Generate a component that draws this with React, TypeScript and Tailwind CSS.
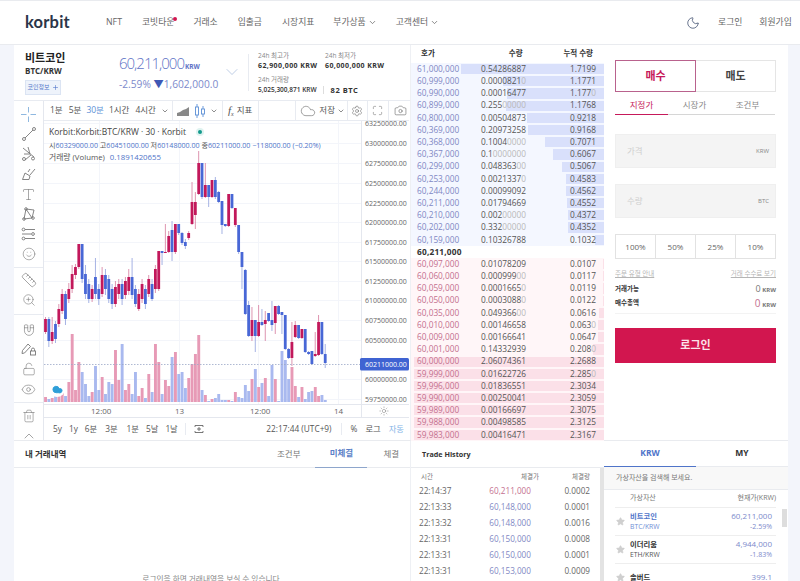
import { Camera, ChevronDown, ChevronUp, Cloud, Eye, LockOpen, Magnet, Maximize, Moon, Plus, Ruler, Settings, Smile, Star, Sun, Trash2, Type, ZoomIn } from "lucide-react";

type Candle = [number, number, number, number, "r" | "b"];

// top, bottom, wick top, wick bottom, colour (page pixels)
const candles: Candle[] = [
  [320, 333, 318, 335, "r"], [320, 342, 318, 348, "b"], [333, 342, 318, 345, "r"], [325, 340, 322, 344, "b"], [310, 325, 305, 328, "r"],
  [295, 312, 290, 315, "r"], [295, 320, 292, 326, "b"], [290, 300, 284, 304, "r"], [275, 290, 266, 294, "r"], [268, 276, 265, 280, "r"],
  [245, 268, 245, 270, "r"], [245, 280, 245, 284, "b"], [275, 295, 266, 300, "b"], [285, 300, 280, 304, "b"], [290, 300, 286, 303, "r"],
  [278, 295, 259, 300, "b"], [290, 300, 285, 306, "b"], [276, 295, 268, 298, "r"], [276, 290, 270, 296, "b"], [280, 300, 276, 304, "b"],
  [290, 305, 285, 310, "b"], [288, 305, 282, 308, "r"], [285, 295, 280, 300, "r"], [285, 300, 280, 306, "b"], [282, 296, 278, 300, "r"],
  [278, 292, 270, 296, "r"], [278, 296, 259, 300, "b"], [290, 305, 286, 308, "b"], [295, 310, 290, 312, "r"], [285, 300, 280, 304, "r"],
  [290, 305, 286, 310, "b"], [280, 295, 276, 298, "r"], [285, 300, 280, 302, "b"], [270, 290, 266, 294, "r"], [252, 290, 252, 292, "r"],
  [252, 254, 252, 266, "b"], [253, 254, 225, 254, "r"], [237, 253, 232, 254, "r"], [231, 253, 222, 262, "b"], [225, 253, 225, 255, "r"],
  [225, 234, 225, 236, "b"], [234, 244, 233, 246, "b"], [243, 247, 240, 250, "b"], [234, 239, 232, 241, "r"], [203, 225, 183, 226, "r"],
  [203, 216, 193, 230, "r"], [164, 195, 152, 196, "r"], [164, 198, 164, 200, "b"], [186, 198, 164, 199, "r"], [186, 198, 186, 208, "b"],
  [181, 198, 181, 199, "r"], [181, 198, 178, 200, "b"], [193, 203, 192, 204, "b"], [202, 226, 202, 235, "b"], [225, 227, 225, 228, "b"],
  [195, 227, 195, 228, "r"], [195, 209, 195, 210, "b"], [209, 226, 209, 228, "r"], [226, 253, 226, 255, "b"], [253, 268, 253, 290, "b"],
  [271, 315, 270, 316, "b"], [306, 337, 302, 338, "b"], [321, 337, 308, 342, "r"], [321, 337, 321, 353, "b"], [323, 337, 306, 338, "r"],
  [323, 326, 310, 327, "b"], [321, 325, 312, 342, "r"], [314, 322, 314, 323, "b"], [321, 326, 302, 332, "b"], [307, 324, 307, 335, "r"],
  [307, 315, 306, 316, "b"], [313, 316, 313, 335, "b"], [316, 350, 316, 351, "b"], [350, 359, 349, 360, "b"], [343, 359, 323, 367, "r"],
  [326, 338, 322, 339, "r"], [326, 339, 326, 340, "b"], [330, 339, 330, 340, "r"], [330, 353, 330, 354, "b"], [353, 355, 352, 356, "b"],
  [352, 365, 352, 366, "b"], [355, 357, 333, 358, "r"], [323, 356, 316, 357, "r"], [323, 355, 323, 356, "b"], [355, 364, 345, 369, "b"],
];

const volumes = [
  5, 3, 4, 6, 8, 10, 6, 20, 68, 12, 40, 30, 18, 6, 10, 36, 12, 25, 8, 20, 18, 52, 22, 58, 12, 18, 8, 30, 6, 14, 4, 28, 10, 58, 40, 8, 22, 16, 45, 50, 28,
  30, 14, 24, 38, 48, 67, 12, 7, 1, 3, 4, 8, 2, 2, 2, 1, 10, 5, 4, 17, 11, 23, 33, 15, 19, 24, 6, 37, 23, 1, 51, 42, 23, 35, 16, 5, 15, 3, 10, 11, 15, 6, 7, 2,
];

const axis: [string, number][] = [
  ["63250000.00", 124], ["63000000.00", 144], ["62750000.00", 164], ["62500000.00", 184], ["62250000.00", 204], ["62000000.00", 223],
  ["61750000.00", 243], ["61500000.00", 262], ["61250000.00", 282], ["61000000.00", 301], ["60750000.00", 321], ["60500000.00", 341],
  ["60000000.00", 380], ["59750000.00", 400],
];

const bids: [string, string, string, number][] = [
  ["61,000,000", "0.54286887", "1.7199", 143], ["60,999,000", "0.00008210", "1.1771", 101], ["60,990,000", "0.00016477", "1.1770", 97],
  ["60,899,000", "0.25500000", "1.1768", 98], ["60,800,000", "0.00504873", "0.9218", 77], ["60,369,000", "0.20973258", "0.9168", 76],
  ["60,368,000", "0.10040000", "0.7071", 59], ["60,367,000", "0.10000000", "0.6067", 51], ["60,299,000", "0.04836300", "0.5067", 42],
  ["60,253,000", "0.00213370", "0.4583", 38], ["60,244,000", "0.00099092", "0.4562", 38], ["60,211,000", "0.01794669", "0.4552", 37],
  ["60,210,000", "0.00200000", "0.4372", 36], ["60,202,000", "0.33200000", "0.4352", 36], ["60,159,000", "0.10326788", "0.1032", 9],
];

const asks: [string, string, string, number][] = [
  ["60,097,000", "0.01078209", "0.0107", 1], ["60,060,000", "0.00099900", "0.0117", 1], ["60,059,000", "0.00016650", "0.0119", 1],
  ["60,050,000", "0.00030880", "0.0122", 1], ["60,035,000", "0.04936600", "0.0616", 5], ["60,010,000", "0.00146658", "0.0630", 6],
  ["60,009,000", "0.00166641", "0.0647", 6], ["60,001,000", "0.14332939", "0.2080", 11], ["60,000,000", "2.06074361", "2.2688", 190],
  ["59,999,000", "0.01622726", "2.2850", 190], ["59,996,000", "0.01836551", "2.3034", 190], ["59,990,000", "0.00250041", "2.3059", 190],
  ["59,989,000", "0.00166697", "2.3075", 190], ["59,988,000", "0.00498585", "2.3125", 190], ["59,983,000", "0.00416471", "2.3167", 190],
];

const trades = [
  ["22:14:37", "60,211,000", "0.0002", "r"], ["22:13:33", "60,148,000", "0.0001", "b"], ["22:13:32", "60,148,000", "0.0016", "b"],
  ["22:13:31", "60,150,000", "0.0008", "b"], ["22:13:31", "60,150,000", "0.0001", "b"], ["22:13:31", "60,153,000", "0.0009", "b"],
];

const Num = ({ value }: { value: string }) => {
  const m = value.match(/^(.*?)(0*)$/)!;
  return (
    <span>
      {m[1]}
      <span className="text-[#b9b9b9]">{m[2]}</span>
    </span>
  );
};

const BookRow = ({ row, side }: { row: [string, string, string, number]; side: "bid" | "ask" }) => (
  <div className={`relative flex h-[12.2px] items-center pl-[6px] pr-[8px] text-[8.3px] text-[#555] ${side === "bid" ? "bg-[#f4f7ff]" : "bg-[#fff6f8]"}`}>
    <div
      className={`absolute right-0 top-[1px] bottom-[1px] ${side === "bid" ? "bg-[#d9e0fb]" : "bg-[#fbe0e8]"}`}
      style={{ width: row[3] }}
    />
    <span className={`relative w-[43px] ${side === "bid" ? "text-[#7f88c4]" : "text-[#c4708f]"}`}>{row[0]}</span>
    <span className="relative ml-[19px] w-[47px] text-right"><Num value={row[1]} /></span>
    <span className="relative ml-auto"><Num value={row[2]} /></span>
  </div>
);

const LineTool = () => (
  <svg width="16" height="16" viewBox="0 0 16 16" fill="none" stroke="#777" strokeWidth="0.9">
    <circle cx="3" cy="13" r="1.5" />
    <circle cx="13" cy="3" r="1.5" />
    <path d="M4 12 12 4" />
  </svg>
);
const ForkTool = () => (
  <svg width="16" height="16" viewBox="0 0 16 16" fill="none" stroke="#777" strokeWidth="0.9">
    <path d="M2 2 13 11M7 1 9 8M3 8 9 8M4 14 10 9" />
    <circle cx="3" cy="13" r="1.5" />
    <circle cx="12" cy="12.5" r="1.5" />
  </svg>
);
const BrushTool = () => (
  <svg width="16" height="16" viewBox="0 0 16 16" fill="none" stroke="#777" strokeWidth="0.9">
    <path d="M1.5 13.5 4 7l5 3-1 3.5zM9 9l5-6M7 6l2-3" />
  </svg>
);
const PatternTool = () => (
  <svg width="16" height="16" viewBox="0 0 16 16" fill="none" stroke="#777" strokeWidth="0.9">
    <path d="M3 13 5 3l6 9 2-8M5 3l8 1M3 13l8-1" />
    <circle cx="5" cy="3" r="1.3" />
    <circle cx="3" cy="13" r="1.3" />
    <circle cx="12" cy="12" r="1.3" />
  </svg>
);
const LevelTool = () => (
  <svg width="16" height="16" viewBox="0 0 16 16" fill="none" stroke="#777" strokeWidth="0.9">
    <circle cx="2.5" cy="3.5" r="1.4" />
    <path d="M4 3.5h10M1 8h9" />
    <circle cx="12" cy="8" r="1.4" />
    <circle cx="2.5" cy="12.5" r="1.4" />
    <path d="M4 12.5h10" />
  </svg>
);
const Crosshair = () => (
  <svg width="15" height="15" viewBox="0 0 15 15" stroke="#8fb8e0" strokeWidth="1">
    <path d="M7.5 0v5.5M7.5 9.5v5.5M0 7.5h5.5M9.5 7.5h5.5" />
  </svg>
);
const PencilLock = () => (
  <svg width="16" height="16" viewBox="0 0 16 16" fill="none" stroke="#777" strokeWidth="0.9">
    <path d="M1.5 9.5 7 3l2.5 2.500L3.5 12l-2.500.5z" />
    <rect x="9.5" y="10" width="5" height="4" />
    <path d="M10.5 10V8.5a1.5 1.5 0 0 1 3 0V10" />
  </svg>
);

const Tool = ({ children }: { children: React.ReactNode }) => (
  <div className="flex h-[20px] shrink-0 items-center justify-center">{children}</div>
);

const Divider = () => <div className="h-[21px] w-px shrink-0 bg-[#e8ebf1]" />;

const ChartBody = () => (
  <svg width="365" height="283" viewBox="45 122 365 283" className="block">
    {axis.map(([, y]) => (
      <path key={y} d={`M45 ${y + 0.5}H362`} stroke="#f3f5fa" strokeWidth="1" />
    ))}
    {[100, 180, 259, 339].map((x) => (
      <path key={x} d={`M${x + 0.5} 122V405`} stroke="#f3f5fa" strokeWidth="1" />
    ))}
    {volumes.map((h, i) => (
      <rect
        key={i}
        x={45.1 + i * 3.33}
        y={403 - h}
        width="2.9"
        height={h}
        fill={candles[i][4] === "r" ? "#e79ab6" : "#a9b9ef"}
      />
    ))}
    {candles.map(([top, bottom, wickTop, wickBottom, c], i) => {
      const x = 46.5 + i * 3.33;
      return (
        <g key={i}>
          <path d={`M${x} ${wickTop}V${wickBottom}`} stroke={c === "r" ? "#d57a9c" : "#8fa0dd"} strokeWidth="0.8" />
          <rect x={x - 1.4} y={top} width="2.8" height={Math.max(bottom - top, 1)} fill={c === "r" ? "#c2185b" : "#4867d6"} />
        </g>
      );
    })}
    <path d="M45 365.5H362" stroke="#9aa7c7" strokeWidth="0.8" strokeDasharray="1.5 1.5" />
    <rect x="362" y="122" width="48" height="283" fill="#fff" />
    <path d="M362.5 122V405" stroke="#e4e7ee" />
    {axis.map(([label, y]) => (
      <text key={label} x="366" y={y + 3} fontSize="7" fill="#666" fontFamily="'Open Sans', sans-serif">
        {label}
      </text>
    ))}
    <rect x="361" y="359" width="49" height="12.5" rx="1.5" fill="#3f63d2" />
    <text x="366" y="368" fontSize="7" fill="#fff" fontFamily="'Open Sans', sans-serif">
      60211000.00
    </text>
  </svg>
);

const Chart = () => (
  <div className="flex h-[341px] border-t border-[#e8ebf1]">
    <div className="flex w-[30px] shrink-0 flex-col overflow-hidden border-r border-[#e4e7ee] pt-[3px] text-[#777]">
      <Tool><Crosshair /></Tool>
      <Tool><LineTool /></Tool>
      <Tool><ForkTool /></Tool>
      <Tool><BrushTool /></Tool>
      <Tool><Type size={15} strokeWidth={1} /></Tool>
      <Tool><PatternTool /></Tool>
      <Tool><LevelTool /></Tool>
      <Tool><Smile size={14} strokeWidth={1} /></Tool>
      <div className="mb-[2px] mt-[3px] h-px shrink-0 bg-[#e8ebf1]" />
      <Tool><Ruler size={16} strokeWidth={1} /></Tool>
      <Tool><ZoomIn size={14} strokeWidth={1} /></Tool>
      <div className="my-[4px] h-px shrink-0 bg-[#e8ebf1]" />
      <Tool><Magnet size={14} strokeWidth={1} className="rotate-[135deg]" /></Tool>
      <Tool><PencilLock /></Tool>
      <Tool><LockOpen size={14} strokeWidth={1} /></Tool>
      <Tool><Eye size={15} strokeWidth={1} /></Tool>
      <div className="my-[3px] h-px shrink-0 bg-[#e8ebf1]" />
      <Tool><Trash2 size={14} strokeWidth={1} /></Tool>
      <Tool><ChevronUp size={16} strokeWidth={1} /></Tool>
    </div>
    <div className="flex w-[365px] flex-col text-[8.5px] text-[#555]">
      <div className="flex h-[20px] shrink-0 items-center whitespace-nowrap border-b border-[#e8ebf1]">
        <span className="ml-[6px]">1분</span>
        <span className="ml-[6px]">5분</span>
        <span className="ml-[5px] text-[#5b8fd6]">30분</span>
        <span className="ml-[5px]">1시간</span>
        <span className="ml-[6px]">4시간</span>
        <ChevronDown size={8} className="ml-[5px] shrink-0" />
        <div className="ml-[3px] mr-[4px]"><Divider /></div>
        <svg width="13" height="10" viewBox="0 0 13 10" fill="#888" className="shrink-0">
          <path d="M0 10V7l3-1 3-2 3-1 3-2v9z" />
        </svg>
        <svg width="12" height="14" viewBox="0 0 12 14" fill="none" stroke="#5b8fd6" strokeWidth="0.9" className="ml-[4px] shrink-0">
          <rect x="1.5" y="3" width="3" height="8" />
          <rect x="7.5" y="5" width="3" height="5" />
          <path d="M3 0v3M3 11v3M9 2v3M9 10v3" />
        </svg>
        <ChevronDown size={8} className="ml-[4px] shrink-0" />
        <div className="ml-[4px] mr-[5px]"><Divider /></div>
        <span className="font-['Liberation_Serif',serif] text-[11px] italic">f<sub className="text-[6px]">x</sub></span>
        <span className="ml-[3px]">지표</span>
        <div className="ml-[6px]"><Divider /></div>
        <div className="ml-[36px]"><Divider /></div>
        <Cloud size={16} strokeWidth={0.8} strokeDasharray="2 1" className="ml-[4px] shrink-0" />
        <span className="ml-[3px]">저장</span>
        <ChevronDown size={8} className="ml-[2px] shrink-0" />
        <div className="ml-[2px]"><Divider /></div>
        <Settings size={12} strokeWidth={1} className="ml-[3px] shrink-0" />
        <div className="ml-[4px]"><Divider /></div>
        <Maximize size={11} strokeWidth={1} className="ml-[4px] shrink-0" />
        <div className="ml-[5px]"><Divider /></div>
        <Camera size={13} strokeWidth={1} className="ml-[5px] shrink-0" />
      </div>
      <div className="relative h-[283px] shrink-0 overflow-hidden">
        <ChartBody />
        <div className="absolute left-[5px] top-[5px] text-[8.5px] leading-[12.5px]">
          <div className="flex items-center text-[#444]">
            Korbit:Korbit:BTC/KRW · 30 · Korbit
            <span className="ml-[10px] flex h-[8px] w-[8px] items-center justify-center rounded-full bg-[#dff3f0]">
              <span className="h-[4px] w-[4px] rounded-full bg-[#139a8c]" />
            </span>
          </div>
          <div className="whitespace-nowrap text-[7.1px] text-[#555]">
            시<span className="text-[#4f74c9]">60329000.00</span> 고<span className="text-[#4f74c9]">60451000.00</span> 저<span className="text-[#4f74c9]">60148000.00</span> 종<span className="text-[#4f74c9]">60211000.00</span> <span className="text-[#4f74c9]">−118000.00 (−0.20%)</span>
          </div>
          <div className="text-[7.8px] text-[#555]">
            거래량 (Volume) <span className="ml-[3px] text-[#4f74c9]">0.1891420655</span>
          </div>
        </div>
        <div className="absolute left-[5px] top-[260px] flex h-[16px] w-[16px] items-center justify-center rounded-full bg-white">
          <Cloud size={11} fill="#2f9fd8" stroke="#2f9fd8" />
        </div>
      </div>
      <div className="relative flex h-[14px] shrink-0 items-center border-t border-b border-[#e4e7ee] text-[8px] text-[#666]">
        <span className="absolute left-[47px]">12:00</span>
        <span className="absolute left-[131px]">13</span>
        <span className="absolute left-[206px]">12:00</span>
        <span className="absolute left-[290px]">14</span>
        <div className="absolute bottom-0 left-[317px] top-0 w-px bg-[#e4e7ee]" />
        <Sun size={10} strokeWidth={1} className="absolute left-[335px] top-[1px]" />
      </div>
      <div className="flex h-[22px] shrink-0 items-center whitespace-nowrap text-[8.3px]">
        <span className="ml-[9px]">5y</span>
        <span className="ml-[7px]">1y</span>
        <span className="ml-[7px]">6분</span>
        <span className="ml-[8px]">3분</span>
        <span className="ml-[9px]">1분</span>
        <span className="ml-[7px]">5날</span>
        <span className="ml-[7px]">1날</span>
        <div className="ml-[7px] h-[12px] w-px bg-[#e8ebf1]" />
        <svg width="10" height="10" viewBox="0 0 10 10" fill="none" stroke="#555" strokeWidth="0.8" className="ml-[8px]">
          <path d="M1 3V1.5h8V3M3 5h4M1 7v1.5h8V7M5 3v4" />
        </svg>
        <span className="ml-auto">22:17:44 (UTC+9)</span>
        <div className="ml-[9px] h-[12px] w-px bg-[#e8ebf1]" />
        <span className="ml-[9px]">%</span>
        <span className="ml-[8px]">로그</span>
        <span className="ml-[8px] mr-[5px] text-[#7fb3e6]">자동</span>
      </div>
    </div>
  </div>
);

const Ticker = () => (
  <div className="flex h-[55px] text-[#333]">
    <div className="w-[105px] pl-[11px] pt-[6px]">
      <div className="text-[11px] font-bold leading-[14px] text-[#222]">비트코인</div>
      <div className="text-[8px] font-bold leading-[11px]">BTC/KRW</div>
      <div className="mt-[4px] flex h-[15px] w-[36px] items-center justify-center gap-[2px] border border-[#dbe4f3] bg-[#eef3fb] text-[6px] text-[#4f74c9]">
        코인정보
        <Plus size={7} />
      </div>
    </div>
    <div className="relative w-[129px] pt-[8px] text-[#6073c6]">
      <div className="flex items-baseline">
        <span className="text-[15px] font-light leading-[20px] tracking-[-1px]">60,211,000</span>
        <span className="ml-[1px] text-[6.5px] font-bold">KRW</span>
      </div>
      <div className="mt-[4px] whitespace-nowrap text-[10.2px] leading-[14px] text-[#7c8acb]">
        -2.59% <span className="text-[#3f58b5]">▼</span>1,602,000.0
      </div>
      <ChevronDown size={20} strokeWidth={0.8} className="absolute left-[103px] top-[17px] text-[#9db4d8]" />
    </div>
    <div className="my-[9px] w-px bg-[#e8ebf1]" />
    <div className="ml-[9px] pt-[6px]">
      <div className="flex">
        <div className="w-[67px]">
          <div className="text-[6.5px] leading-[9px] text-[#888]">24h 최고가</div>
          <div className="whitespace-nowrap text-[7px] font-bold leading-[11px] tracking-[0.4px] text-[#333]">62,900,000 KRW</div>
        </div>
        <div>
          <div className="text-[6.5px] leading-[9px] text-[#888]">24h 최저가</div>
          <div className="whitespace-nowrap text-[7px] font-bold leading-[11px] tracking-[0.4px] text-[#333]">60,000,000 KRW</div>
        </div>
      </div>
      <div className="mt-[4px] text-[6.5px] leading-[9px] text-[#888]">24h 거래량</div>
      <div className="flex items-center whitespace-nowrap text-[6.5px] font-semibold leading-[12px] text-[#333]">
        5,025,300,871 KRW
        <span className="ml-[6px] mr-[7px] h-[8px] w-px bg-[#ddd]" />
        <span className="text-[7.5px] font-bold tracking-[0.5px]">82 BTC</span>
      </div>
    </div>
  </div>
);

const OrderForm = () => (
  <div className="w-[184px] px-[11px] pt-[15px] text-[#555]">
    <div className="flex h-[32px] w-[161px] text-[11px] font-bold">
      <div className="flex w-[81px] items-center justify-center border border-[#b9628d] text-[#c6195a]">매수</div>
      <div className="flex w-[80px] items-center justify-center border border-l-0 border-[#e5e5e5] text-[#444]">매도</div>
    </div>
    <div className="mt-[5px] flex h-[18px] w-[160px] border-b border-[#d6d6d6] text-[8.5px]">
      <div className="-mb-px flex w-[53px] items-center justify-center border-b border-[#c6195a] text-[#c6195a]">지정가</div>
      <div className="flex w-[53px] items-center justify-center text-[#888]">시장가</div>
      <div className="flex w-[53px] items-center justify-center text-[#888]">조건부</div>
    </div>
    <div className="mt-[19px] flex h-[34px] w-[161px] items-center justify-between border border-[#efefef] bg-[#f4f4f4] pl-[11px] pr-[6px] text-[8.5px] text-[#cfcfcf]">
      가격
      <span className="text-[6px] text-[#888]">KRW</span>
    </div>
    <div className="mt-[16px] flex h-[34px] w-[161px] items-center justify-between border border-[#efefef] bg-[#f4f4f4] pl-[11px] pr-[6px] text-[8.5px] text-[#cfcfcf]">
      수량
      <span className="text-[6px] text-[#888]">BTC</span>
    </div>
    <div className="mt-[16px] flex h-[25px] w-[161px] border border-[#e2e2e2] text-[8px] text-[#666]">
      <div className="flex w-[40px] items-center justify-center border-r border-[#e2e2e2]">100%</div>
      <div className="flex w-[40px] items-center justify-center border-r border-[#e2e2e2]">50%</div>
      <div className="flex w-[40px] items-center justify-center border-r border-[#e2e2e2]">25%</div>
      <div className="flex flex-1 items-center justify-center">10%</div>
    </div>
    <div className="mt-[10px] flex w-[161px] justify-between text-[6.5px] leading-[10px] text-[#b5b5b5] underline">
      <span>주문 유형 안내</span>
      <span>거래 수수료 보기</span>
    </div>
    <div className="mt-[3px] flex h-[14px] w-[161px] items-center justify-between text-[6.5px] font-bold text-[#333]">
      거래가능
      <span className="font-normal"><span className="text-[9px] text-[#777]">0</span> <span className="text-[6px] font-bold text-[#777]">KRW</span></span>
    </div>
    <div className="flex h-[14px] w-[161px] items-center justify-between text-[6.5px] font-bold text-[#333]">
      매수총액
      <span className="font-normal"><span className="text-[10px] text-[#c4708f]">0</span> <span className="text-[6px] font-bold text-[#777]">KRW</span></span>
    </div>
    <div className="mt-[3px] h-px w-[161px] bg-[#f3f3f3]" />
    <div className="mt-[14px] flex h-[35px] w-[161px] items-center justify-center bg-[#d2164f] text-[11px] font-semibold text-[#fbe3ea]">
      로그인
    </div>
  </div>
);

const MarketRow = ({ name, pair, price, change, active }: { name: string; pair: string; price: string; change?: string; active?: boolean }) => (
  <div className="ml-[11px] flex h-[28px] w-[161px] items-center border-b border-[#eeeeee]">
    <Star size={9} fill="#cfcfcf" stroke="#cfcfcf" className="ml-[1px]" />
    <div className="ml-[5px] leading-[10px]">
      <div className={`text-[7.3px] font-bold ${active ? "text-[#4f74c9]" : "text-[#333]"}`}>{name}</div>
      <div className={`mt-[1px] text-[6.8px] ${active ? "text-[#6f8fd6]" : "text-[#555]"}`}>{pair}</div>
    </div>
    <div className="ml-auto mr-[4px] text-right leading-[10.5px] text-[#7c8acb]">
      <div className="text-[8px]">{price}</div>
      {change && <div className="text-[7px]">{change}</div>}
    </div>
  </div>
);

export default function App() {
  return (
    <div className="h-[581px] w-[800px] overflow-hidden bg-[#f3f5fb] font-['Open_Sans','Noto_Sans_CJK_KR',sans-serif]">
      <header className="flex h-[45px] items-center border-t border-b border-[#e9ebef] bg-white text-[8.8px] text-[#666]">
        <span className="ml-[25px] w-[56px] font-['Lato',sans-serif] text-[16.5px] font-bold tracking-[0.2px] text-[#2b3548]">korbit</span>
        <span className="ml-[25px]">NFT</span>
        <span className="relative ml-[20px]">
          코빗타운
          <span className="absolute -right-[3px] top-[1px] h-[4px] w-[4px] rounded-full bg-[#d2164f]" />
        </span>
        <span className="ml-[19px]">거래소</span>
        <span className="ml-[20px]">입출금</span>
        <span className="ml-[20px]">시장지표</span>
        <span className="ml-[19px]">부가상품</span>
        <ChevronDown size={9} strokeWidth={2} className="ml-[2px]" />
        <span className="ml-[19px]">고객센터</span>
        <ChevronDown size={9} strokeWidth={2} className="ml-[2px]" />
        <Moon size={14} strokeWidth={1.3} className="ml-[247px] text-[#3a4a6b]" />
        <span className="ml-[18px]">로그인</span>
        <span className="ml-[17px]">회원가입</span>
      </header>
      <main className="ml-[14px] w-[774px] bg-white">
        <div className="flex h-[396px] border-b border-[#e9ebef]">
          <div className="w-[396px] overflow-hidden">
            <Ticker />
            <Chart />
          </div>
          <div className="w-[194px] border-l border-[#eef0f4]">
            <div className="flex h-[18px] items-center pl-[10px] pr-[11px] text-[7.5px] font-bold text-[#333]">
              <span>호가</span>
              <span className="ml-[74px]">수량</span>
              <span className="ml-auto">누적 수량</span>
            </div>
            {bids.map((row) => <BookRow key={row[0]} row={row} side="bid" />)}
            <div className="flex h-[12.2px] items-center pl-[6px] text-[8.3px] font-bold tracking-[0.2px] text-[#333]">60,211,000</div>
            {asks.map((row) => <BookRow key={row[0]} row={row} side="ask" />)}
          </div>
          <OrderForm />
        </div>
        <div className="flex h-[140px]">
          <div className="w-[396px]">
            <div className="flex h-[27px] items-center whitespace-nowrap border-b border-[#e9ebef] pl-[11px] text-[8.5px]">
              <span className="w-[43px] font-bold text-[#333]">내 거래내역</span>
              <span className="ml-[209px] text-[#777]">조건부</span>
              <div className="ml-[15px] flex h-[27px] w-[52px] items-center justify-center border-b border-[#8ea6cc] font-semibold text-[#5b7fc7]">미체결</div>
              <span className="ml-[16px] text-[#777]">체결</span>
            </div>
            <div className="pt-[106px] text-center text-[7.7px] leading-[10px] text-[#888]">로그인을 하면 거래내역을 보실 수 있습니다.</div>
          </div>
          <div className="relative w-[194px] border-l border-[#eef0f4]">
            <div className="flex h-[27px] items-center border-b border-[#e9ebef] pl-[11px] text-[7.2px] font-bold text-[#333]">Trade History</div>
            <div className="absolute bottom-0 right-0 top-[27px] w-[4px] bg-[#e3e3e3]" />
            <div className="flex h-[15px] items-center justify-between pl-[10px] pr-[14px] pt-[3px] text-[6.5px] text-[#777]">
              <span>시간</span>
              <span className="ml-[55px]">체결가</span>
              <span>체결량</span>
            </div>
            {trades.map((t, i) => (
              <div key={i} className="flex h-[16px] items-center pl-[8px] pr-[14px] text-[8.2px] text-[#666]">
                <span className="w-[38px]">{t[0]}</span>
                <span className={`ml-[29px] w-[45px] text-right ${t[3] === "r" ? "text-[#c4708f]" : "text-[#7f88c4]"}`}>{t[1]}</span>
                <span className="ml-auto">{t[2]}</span>
              </div>
            ))}
          </div>
          <div className="relative w-[184px]">
            <div className="flex h-[26px] text-[8.5px] font-bold">
              <div className="flex w-[92px] items-center justify-center border-b border-[#4f74c9] text-[#4f74c9]">KRW</div>
              <div className="flex flex-1 items-center justify-center border-b border-[#e9ebef] text-[#333]">MY</div>
            </div>
            <div className="flex h-[23px] items-center border-b border-[#e9ebef] bg-[#f8f8f8] pl-[12px] text-[7px] text-[#777]">가상자산을 검색해 보세요.</div>
            <div className="ml-[11px] flex h-[18px] w-[161px] items-center justify-between border-b border-[#eeeeee] pl-[15px] text-[7px] text-[#777]">
              <span>가상자산</span>
              <span>현재가(KRW)</span>
            </div>
            <MarketRow name="비트코인" pair="BTC/KRW" price="60,211,000" change="-2.59%" active />
            <MarketRow name="이더리움" pair="ETH/KRW" price="4,944,000" change="-1.83%" />
            <MarketRow name="솔버드" pair="" price="399.1" />
            <div className="absolute right-[1px] top-[68px] h-[18px] w-[5px] bg-[#dddddd]" />
          </div>
        </div>
      </main>
    </div>
  );
}
